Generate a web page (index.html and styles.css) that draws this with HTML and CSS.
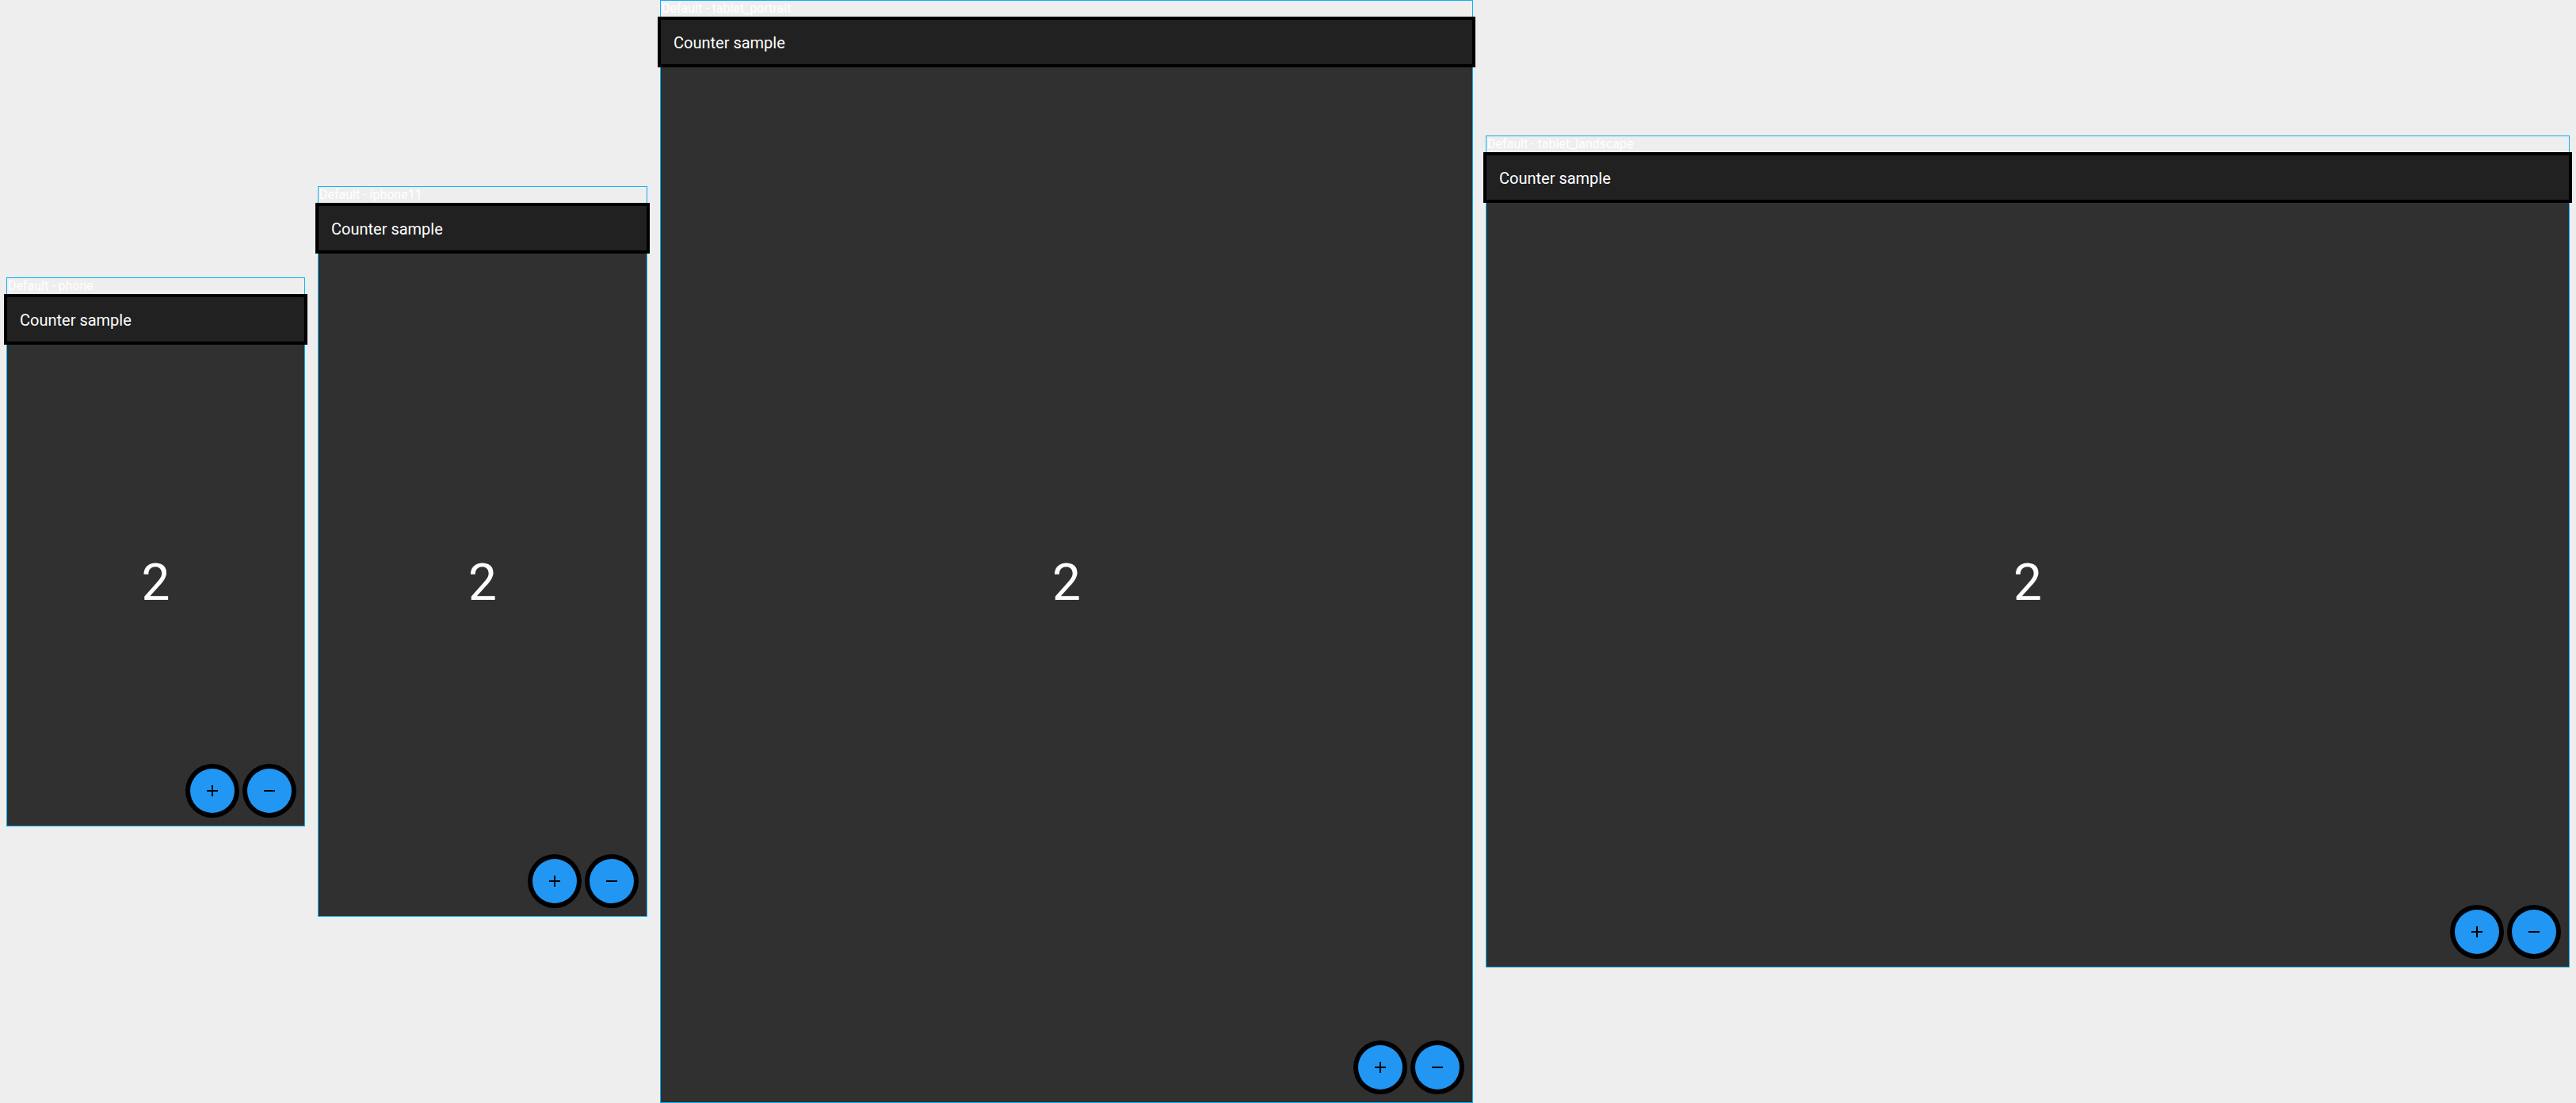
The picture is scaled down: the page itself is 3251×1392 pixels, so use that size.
FILE: index.html
```html
<!DOCTYPE html>
<html lang="en">
<head>
<meta charset="utf-8">
<title>Counter sample goldens</title>
<link rel="stylesheet" href="styles.css">
</head>
<body>
<div class="canvas">
  <div class="frame">
    <div class="label">Default - phone</div>
    <div class="screen phone">
      <div class="appbar">Counter sample</div>
      <div class="content"><span class="count">2</span></div>
      <div class="fabs">
        <button class="fab"><svg viewBox="0 0 24 24" width="24" height="24"><path d="M19 13h-6v6h-2v-6H5v-2h6V5h2v6h6v2z"/></svg></button>
        <button class="fab"><svg viewBox="0 0 24 24" width="24" height="24"><path d="M19 13H5v-2h14v2z"/></svg></button>
      </div>
    </div>
  </div>
  <div class="frame">
    <div class="label">Default - iphone11</div>
    <div class="screen iphone11">
      <div class="appbar">Counter sample</div>
      <div class="content"><span class="count">2</span></div>
      <div class="fabs">
        <button class="fab"><svg viewBox="0 0 24 24" width="24" height="24"><path d="M19 13h-6v6h-2v-6H5v-2h6V5h2v6h6v2z"/></svg></button>
        <button class="fab"><svg viewBox="0 0 24 24" width="24" height="24"><path d="M19 13H5v-2h14v2z"/></svg></button>
      </div>
    </div>
  </div>
  <div class="frame">
    <div class="label">Default - tablet_portrait</div>
    <div class="screen tablet-portrait">
      <div class="appbar">Counter sample</div>
      <div class="content"><span class="count">2</span></div>
      <div class="fabs">
        <button class="fab"><svg viewBox="0 0 24 24" width="24" height="24"><path d="M19 13h-6v6h-2v-6H5v-2h6V5h2v6h6v2z"/></svg></button>
        <button class="fab"><svg viewBox="0 0 24 24" width="24" height="24"><path d="M19 13H5v-2h14v2z"/></svg></button>
      </div>
    </div>
  </div>
  <div class="frame">
    <div class="label">Default - tablet_landscape</div>
    <div class="screen tablet-landscape">
      <div class="appbar">Counter sample</div>
      <div class="content"><span class="count">2</span></div>
      <div class="fabs">
        <button class="fab"><svg viewBox="0 0 24 24" width="24" height="24"><path d="M19 13h-6v6h-2v-6H5v-2h6V5h2v6h6v2z"/></svg></button>
        <button class="fab"><svg viewBox="0 0 24 24" width="24" height="24"><path d="M19 13H5v-2h14v2z"/></svg></button>
      </div>
    </div>
  </div>
</div>
</body>
</html>
```

FILE: styles.css
```css
html, body {
  margin: 0;
  padding: 0;
  background: #eeeeee;
  font-family: Roboto, "Liberation Sans", sans-serif;
}

.canvas {
  height: 1392px;
  display: flex;
  align-items: center;
  gap: 16px;
  padding-left: 8px;
}

.frame {
  flex: none;
  border: 1px solid #0ab0f5;
  display: flex;
  flex-direction: column;
}

.label {
  height: 24px;
  line-height: 20px;
  font-size: 16px;
  color: #ffffff;
  padding-left: 1px;
  white-space: nowrap;
  overflow: hidden;
}

.screen {
  position: relative;
  background: #303030;
  display: flex;
  flex-direction: column;
}

.phone { width: 375px; height: 667px; }
.iphone11 { width: 414px; height: 896px; }
.tablet-portrait { width: 1024px; height: 1366px; }
.tablet-landscape { width: 1366px; height: 1024px; }

.appbar {
  position: relative;
  z-index: 1;
  height: 56px;
  flex: none;
  box-sizing: border-box;
  padding-top: 2px;
  background: #212121;
  box-shadow: 0 0 0 4px #000000;
  display: flex;
  align-items: center;
  padding-left: 16px;
  font-size: 20px;
  color: #ffffff;
}

.content {
  flex: 1;
  display: flex;
  align-items: center;
  justify-content: center;
}

.count {
  font-size: 64px;
  color: #ffffff;
  line-height: 1.2;
}

.fabs {
  position: absolute;
  right: 16px;
  bottom: 16px;
  display: flex;
  gap: 16px;
}

.fab {
  width: 56px;
  height: 56px;
  padding: 0;
  border: none;
  border-radius: 50%;
  background: #2196f3;
  box-shadow: 0 0 0 6px #000000;
  display: flex;
  align-items: center;
  justify-content: center;
}

.fab svg {
  display: block;
  fill: #000000;
}
```
